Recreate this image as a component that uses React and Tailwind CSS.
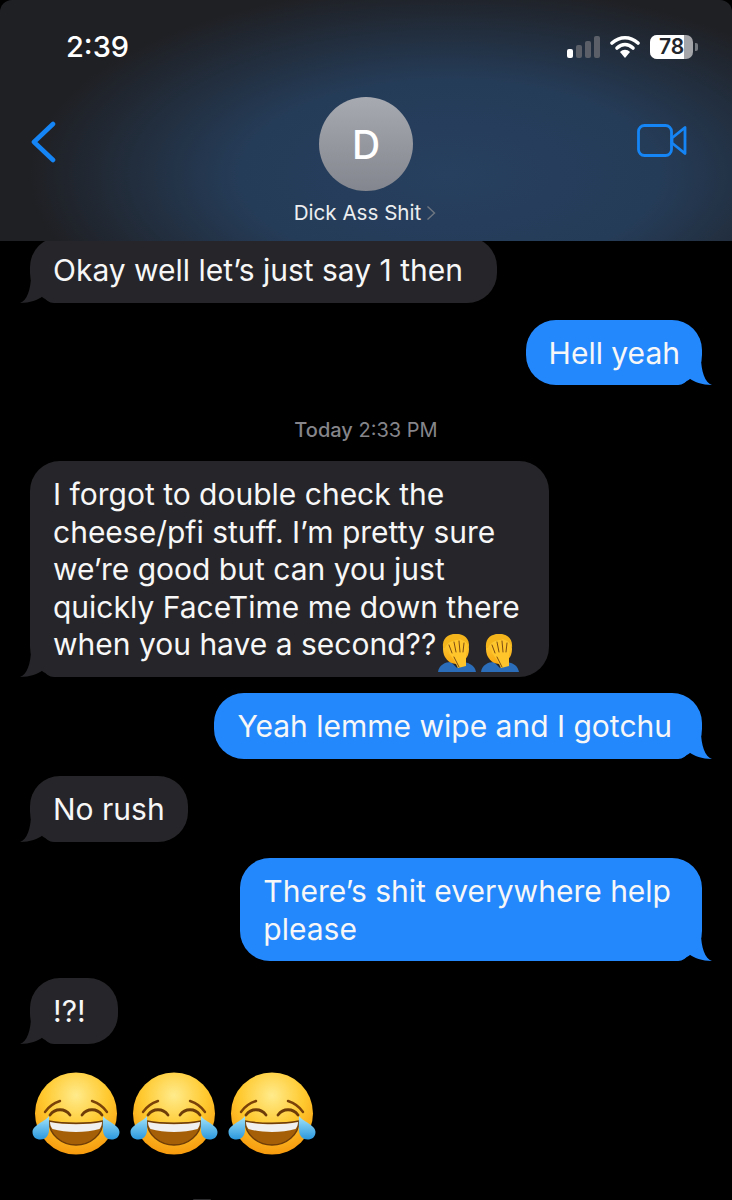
function Tail({ side, color }) {
  if (side === 'right') {
    return (
      <svg className="absolute right-[-10px] bottom-0" width="40" height="28" viewBox="0 0 40 28">
        <path d="M0 28 H6 C11 28 14 25 17 21 C22 25 30 28 40 28 C33 26 29 14 29 0 H0 Z" fill={color} />
      </svg>
    );
  }
  return (
    <svg className="absolute left-[-10px] bottom-0" width="40" height="28" viewBox="0 0 40 28">
      <path d="M40 28 H34 C29 28 26 25 23 21 C18 25 10 28 0 28 C7 26 11 14 11 0 H40 Z" fill={color} />
    </svg>
  );
}

function Bubble({ me, className, children }) {
  const color = me ? '#2488fd' : '#26262a';
  return (
    <div
      className={`relative rounded-[30px] pl-[23px] pt-[15px] pb-[13px] text-[30px] leading-[37.5px] text-[#f7f7f7] w-fit ${
        me ? 'bg-[#2488fd] self-end' : 'bg-[#26262a] self-start'
      } ${className || ''}`}
    >
      <Tail side={me ? 'right' : 'left'} color={color} />
      <span className="relative whitespace-pre-line">{children}</span>
    </div>
  );
}

function Facepalm({ className }) {
  return (
    <svg className={`inline-block align-[-7px] my-[-10px] ${className}`} width="38" height="39" viewBox="4 3 38 39">
      <defs>
        <linearGradient id="palm" x1="0" y1="0" x2="0" y2="1">
          <stop offset="0" stopColor="#ffd640" />
          <stop offset="1" stopColor="#f8a811" />
        </linearGradient>
      </defs>
      <path d="M4 42 C5 35 11 32 17 32 L23 38 L27 32 C34 32 41 35 42 42 Z" fill="#2b6db8" />
      <ellipse cx="22" cy="19" rx="13" ry="15" fill="url(#palm)" />
      <path d="M9 18 C8 8 14 4 22 4 C30 4 36 8 35 18 C33 12 30 10 25 10 C20 10 13 12 11 18 Z" fill="#f4b51c" />
      <path d="M14 15 L26 9 L33 14 L32 26 L32 36 L24 38 L20 30 L15 23 Z" fill="#ffc52b" />
      <path d="M18 23 L15 15 M22 22 L20 12 M26 22 L25 11 M29 22 L30 13 M20 27 L25 37" stroke="#7d4c12" strokeWidth="1" fill="none" strokeLinecap="round" />
    </svg>
  );
}

function LaughEmoji() {
  return (
    <svg width="88" height="84" viewBox="0 0 88 84">
      <defs>
        <radialGradient id="face" cx="0.5" cy="0.28" r="0.78">
          <stop offset="0" stopColor="#ffeb8c" />
          <stop offset="0.5" stopColor="#ffc92f" />
          <stop offset="1" stopColor="#f59207" />
        </radialGradient>
        <linearGradient id="tear" x1="0" y1="0" x2="0" y2="1">
          <stop offset="0" stopColor="#a4e4fb" />
          <stop offset="1" stopColor="#2a98dd" />
        </linearGradient>
      </defs>
      <circle cx="44" cy="41.5" r="41" fill="url(#face)" />
      <path d="M13 40 C17 34 22 31 28 29 M75 40 C71 34 66 31 60 29" stroke="#7a4208" strokeWidth="2.4" fill="none" strokeLinecap="round" />
      <path d="M18 43 C23 36 33 36 38 43 M50 43 C55 36 65 36 70 43" stroke="#6d3c08" strokeWidth="2.8" fill="none" strokeLinecap="round" />
      <path d="M17 49 C32 52 56 52 71 49 C71 63 58 73 44 73 C30 73 17 63 17 49 Z" fill="#a55f06" stroke="#6d3c08" strokeWidth="1.4" />
      <path d="M18 50 C32 53 56 53 70 50 C70 53 69 55 67.5 57 C54 61 34 61 20.5 57 C19 55 18 53 18 50 Z" fill="#f0f0f0" />
      <path d="M17 44 C14 49 0.5 53 0.5 60 C0.5 65 4 67.5 8.5 67.5 C13 67.5 16.5 64 17 59 C17.5 54 17 49 17 44 Z" fill="url(#tear)" />
      <path d="M71 44 C74 49 87.5 53 87.5 60 C87.5 65 84 67.5 79.5 67.5 C75 67.5 71.5 64 71 59 C70.5 54 71 49 71 44 Z" fill="url(#tear)" />
    </svg>
  );
}

export default function App() {
  return (
    <div className="relative w-[732px] h-[1200px] overflow-hidden bg-black font-['Inter',sans-serif]">
      {/* header */}
      <div className="relative z-10 h-[241px] rounded-t-[12px] bg-[radial-gradient(ellipse_420px_190px_at_450px_175px,#27405f_0%,#253c58_50%,#1f2024_100%)]">
        <div className="flex items-center justify-between pt-[29px] pl-[66px] pr-[34px] h-[64px]">
          <span className="text-[29px] leading-[36px] font-medium text-white">2:39</span>
          <div className="flex items-center gap-[10px]">
            <svg width="33" height="22" viewBox="0 0 33 22">
              <rect x="0" y="13" width="6" height="9" rx="2" fill="#fff" />
              <rect x="9" y="9" width="6" height="13" rx="2" fill="#5b6068" />
              <rect x="18" y="5" width="6" height="17" rx="2" fill="#5b6068" />
              <rect x="27" y="0" width="6" height="22" rx="2" fill="#5b6068" />
            </svg>
            <svg width="30" height="24" viewBox="0 0 30 24">
              <path d="M2 8 C10 1 20 1 28 8" stroke="#fff" strokeWidth="3.6" fill="none" strokeLinecap="round" />
              <path d="M7 13 C12 8.5 18 8.5 23 13" stroke="#fff" strokeWidth="3.6" fill="none" strokeLinecap="round" />
              <path d="M10 17 C13 14 17 14 20 17 L15 23 Z" fill="#fff" />
            </svg>
            <div className="flex items-center gap-[2px]">
              <div className="relative w-[43px] h-[24px] rounded-[7px] overflow-hidden bg-[#a3a5a9] flex items-center justify-center">
                <div className="absolute left-0 top-0 bottom-0 w-[34px] bg-white" />
                <span className="relative text-[21px] leading-[24px] font-semibold text-[#22252b]">78</span>
              </div>
              <div className="w-[3px] h-[8px] rounded-r-[2px] bg-[#73777e]" />
            </div>
          </div>
        </div>
        <div className="relative flex flex-col items-center pt-[33px]">
          <svg className="absolute left-[30px] top-[57px]" width="26" height="42" viewBox="0 0 26 42">
            <path d="M23 3 L4 21 L23 39" stroke="#1585f5" strokeWidth="4.6" fill="none" strokeLinecap="round" strokeLinejoin="round" />
          </svg>
          <svg className="absolute left-[636px] top-[59px]" width="52" height="36" viewBox="0 0 52 36">
            <rect x="2.5" y="2.5" width="33" height="30" rx="6" stroke="#1585f5" strokeWidth="2.8" fill="none" />
            <path d="M36 15 L49 4.5 V30.5 L36 20 Z" stroke="#1585f5" strokeWidth="2.8" fill="none" strokeLinejoin="round" />
          </svg>
          <div className="w-[94px] h-[94px] rounded-full bg-gradient-to-b from-[#a8aab1] to-[#83868e] flex items-center justify-center">
            <span className="text-[39px] leading-none font-medium text-white">D</span>
          </div>
          <div className="flex items-center gap-[5px] mt-[9px] mr-[2px]">
            <span className="text-[20.6px] leading-[26px] text-[#eceef0]">Dick Ass Shit</span>
            <svg width="10" height="16" viewBox="0 0 10 16">
              <path d="M1.5 1.5 L8.5 8 L1.5 14.5" stroke="#6f7782" strokeWidth="1.4" fill="none" />
            </svg>
          </div>
        </div>
      </div>

      {/* messages */}
      <div className="flex flex-col pl-[30px] pr-[30px] mt-[-4px]">
        <Bubble className="pr-[34px]">Okay well let’s just say 1 then</Bubble>
        <Bubble me className="mt-[17px] pr-[22px]">Hell yeah</Bubble>
        <div className="mt-[33px] mb-[19px] text-center text-[20px] leading-[24px] text-[#85858a]">
          <span className="font-medium">Today</span> 2:33 PM
        </div>
        <Bubble className="pr-[29px]">
          {'I forgot to double check the\ncheese/pfi stuff. I’m pretty sure\nwe’re good but can you just\nquickly FaceTime me down there\nwhen you have a second??'}
          <Facepalm className="ml-[2px]" />
          <Facepalm className="ml-[5px]" />
        </Bubble>
        <Bubble me className="mt-[16.5px] pr-[30px]">Yeah lemme wipe and I gotchu</Bubble>
        <Bubble className="mt-[17.5px] pr-[23px]">No rush</Bubble>
        <Bubble me className="mt-[16.5px] pr-[31px]">{'There’s shit everywhere help\nplease'}</Bubble>
        <Bubble className="mt-[17px] pr-[32px]">!?!</Bubble>
        <div className="flex gap-[10px] mt-[28.5px] ml-[2px]">
          <LaughEmoji />
          <LaughEmoji />
          <LaughEmoji />
        </div>
      </div>
      <div className="absolute bottom-0 left-[193px] w-[18px] h-[1px] rounded-t-full bg-[#2c2c2e]" />
    </div>
  );
}
